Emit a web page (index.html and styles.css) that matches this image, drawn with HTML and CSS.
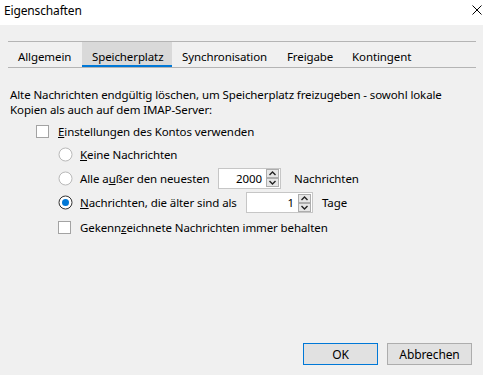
FILE: index.html
```html
<!DOCTYPE html>
<html lang="de">
<head>
<meta charset="utf-8">
<title>Eigenschaften</title>
<link rel="stylesheet" href="styles.css">
</head>
<body>
<div class="window">
  <div class="titlebar">
    <span class="title">Eigenschaften</span>
    <svg class="close" width="10" height="10" viewBox="0 0 10 10"><path d="M0.5 0.5 L9.5 9.5 M9.5 0.5 L0.5 9.5" stroke="#000" stroke-width="1" fill="none"/></svg>
  </div>
  <div class="body">
    <div class="tabs">
      <div class="tab t1">Allgemein</div>
      <div class="tab t2 active">Speicherplatz</div>
      <div class="tab t3">Synchronisation</div>
      <div class="tab t4">Freigabe</div>
      <div class="tab t5">Kontingent</div>
    </div>
    <div class="panel">
      <p class="intro">Alte Nachrichten endgültig löschen, um Speicherplatz freizugeben - sowohl lokale Kopien als auch auf dem IMAP-Server:</p>
      <div class="row row-1">
        <span class="checkbox"></span>
        <span class="label"><u>E</u>instellungen des Kontos verwenden</span>
      </div>
      <div class="options">
        <div class="row row-2">
          <svg class="radio" width="15" height="15" viewBox="0 0 15 15"><circle cx="7.5" cy="7.5" r="6.5" fill="#fff" stroke="#b9b9b9" stroke-width="1"/></svg>
          <span class="label"><u>K</u>eine Nachrichten</span>
        </div>
        <div class="row row-3">
          <svg class="radio" width="15" height="15" viewBox="0 0 15 15"><circle cx="7.5" cy="7.5" r="6.5" fill="#fff" stroke="#b9b9b9" stroke-width="1"/></svg>
          <span class="label w-alle">Alle a<u>u</u>ßer den neuesten</span>
          <div class="spin spin-a">
            <span class="spin-value">2000</span>
            <svg class="spin-btn" width="13" height="18" viewBox="0 0 13 18"><rect x="0.5" y="0.5" width="12" height="8" fill="#e6e6e6" stroke="#adadad"/><rect x="0.5" y="9.5" width="12" height="8" fill="#e6e6e6" stroke="#adadad"/><path d="M3.5 6 L6.5 3 L9.5 6" stroke="#222" stroke-width="1.4" fill="none"/><path d="M3.5 12 L6.5 15 L9.5 12" stroke="#222" stroke-width="1.4" fill="none"/></svg>
          </div>
          <span class="label after-a">Nachrichten</span>
        </div>
        <div class="row row-4">
          <svg class="radio" width="15" height="15" viewBox="0 0 15 15"><circle cx="7.5" cy="7.5" r="6.5" fill="#fff" stroke="#333" stroke-width="1"/><circle cx="7.5" cy="7.5" r="3.5" fill="#0078d7"/></svg>
          <span class="label w-nach"><u>N</u>achrichten, die älter sind als</span>
          <div class="spin spin-b">
            <span class="spin-value">1</span>
            <svg class="spin-btn" width="13" height="18" viewBox="0 0 13 18"><rect x="0.5" y="0.5" width="12" height="8" fill="#e6e6e6" stroke="#adadad"/><rect x="0.5" y="9.5" width="12" height="8" fill="#e6e6e6" stroke="#adadad"/><path d="M3.5 6 L6.5 3 L9.5 6" stroke="#222" stroke-width="1.4" fill="none"/><path d="M3.5 12 L6.5 15 L9.5 12" stroke="#222" stroke-width="1.4" fill="none"/></svg>
          </div>
          <span class="label after-b">Tage</span>
        </div>
        <div class="row row-5">
          <span class="checkbox"></span>
          <span class="label">Gekenn<u>z</u>eichnete Nachrichten immer behalten</span>
        </div>
      </div>
    </div>
    <div class="footer">
      <button class="btn btn-ok">OK</button>
      <button class="btn btn-cancel">Abbrechen</button>
    </div>
  </div>
</div>
</body>
</html>
```
FILE: styles.css
```css
html, body {
  margin: 0;
  padding: 0;
}
body {
  width: 483px;
  height: 375px;
  background: #f0f0f0;
  font-family: "Noto Sans", "Open Sans", sans-serif;
  font-size: 11.5px;
  letter-spacing: -0.1px;
  color: #000;
  overflow: hidden;
}
.window {
  display: flex;
  flex-direction: column;
  height: 375px;
}
.titlebar {
  height: 25px;
  background: #fff;
  display: flex;
  justify-content: space-between;
  align-items: flex-start;
  padding: 0 1px 0 4px;
  box-sizing: border-box;
}
.title {
  line-height: 21px;
  font-size: 12px;
  letter-spacing: -0.15px;
}
.close {
  margin-top: 5px;
  display: block;
}
.body {
  flex: 1;
  display: flex;
  flex-direction: column;
  padding: 16px 7px 0 8px;
}
.tabs {
  display: flex;
  border-top: 1px solid #b4b4b4;
  border-bottom: 1px solid #b4b4b4;
  height: 25px;
}
.tab {
  padding: 6px 0 0 10px;
  line-height: 18px;
  height: 25px;
  box-sizing: border-box;
  white-space: nowrap;
}
.t1 { width: 74px; }
.t2 { width: 90px; }
.t3 { width: 105px; }
.t4 { width: 65px; }
.t5 { width: 80px; }
.tab.active {
  background: #d9d9d9;
  border-bottom: 2px solid #0078d7;
}
.panel {
  flex: 1;
  padding: 0 2px;
}
.intro {
  margin: 19px 0 0;
  line-height: 15px;
}
.row {
  display: flex;
  align-items: center;
}
.row-1 { height: 24px; margin-top: 2px; padding-left: 26px; }
.options { padding-left: 48px; }
.row-2 { height: 23px; }
.row-3 { height: 24px; }
.row-4 { height: 25px; }
.row-5 { height: 25px; }
.checkbox {
  width: 13px;
  height: 13px;
  box-sizing: border-box;
  border: 1px solid #a3a3a3;
  background: #fff;
  margin-right: 9px;
  flex: none;
}
.radio {
  display: block;
  flex: none;
  margin-right: 7px;
}
.label {
  white-space: nowrap;
}
.w-alle { width: 138px; }
.w-nach { width: 166px; }
.spin {
  display: flex;
  align-items: center;
  justify-content: flex-end;
  height: 21px;
  box-sizing: border-box;
  border: 1px solid #c6c6c6;
  background: #fff;
  padding-right: 1px;
  flex: none;
}
.spin-a { width: 63px; }
.spin-b { width: 67px; }
.spin-value {
  margin-right: 4px;
}
.spin-btn { display: block; }
.after-a { margin-left: 13px; }
.after-b { margin-left: 9px; }
.footer {
  display: flex;
  justify-content: flex-end;
  gap: 9px;
  padding: 0 4px 10px 0;
}
.btn {
  font-family: inherit;
  font-size: 12px;
  letter-spacing: -0.1px;
  height: 22px;
  box-sizing: border-box;
  background: #e1e1e1;
  border: 1px solid #adadad;
  color: #000;
  padding: 0;
  margin: 0;
}
.btn-ok { width: 75px; border-color: #0078d7; }
.btn-cancel { width: 85px; }
```
